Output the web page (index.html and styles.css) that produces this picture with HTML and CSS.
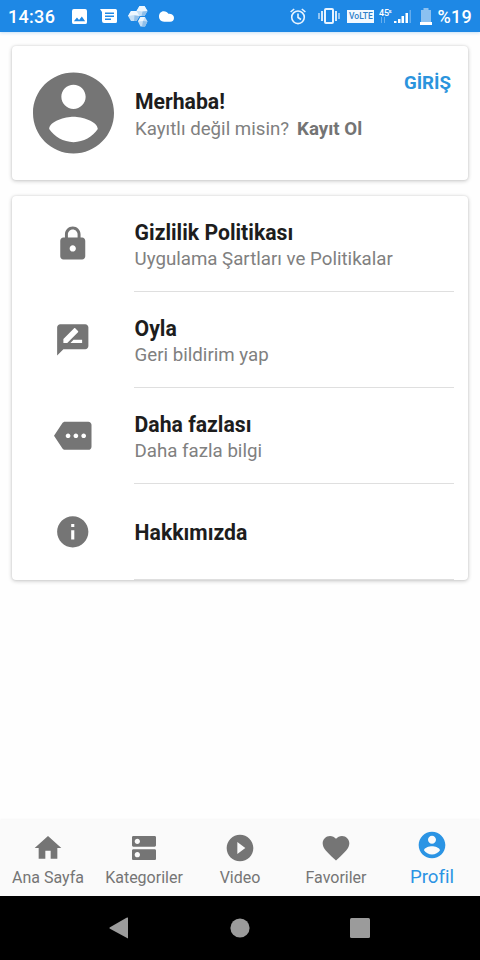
FILE: index.html
```html
<!DOCTYPE html>
<html lang="tr">
<head>
<meta charset="utf-8">
<title>Profil</title>
<link rel="stylesheet" href="styles.css">
</head>
<body>
<header class="status">
  <span class="clock">14:36</span>
  <div class="status-left">
    <svg class="s-photo" width="15" height="15" viewBox="0 0 16 16"><path fill="#fff" fill-rule="evenodd" d="M2 0h12a2 2 0 0 1 2 2v12a2 2 0 0 1-2 2H2a2 2 0 0 1-2-2V2a2 2 0 0 1 2-2zm0 13h12l-3.500-5-3 3.800L5.300 9z"/></svg>
    <svg class="s-news" width="17" height="14" viewBox="0 0 17 14"><path fill="#fff" fill-rule="evenodd" d="M0 0h15.500A1.500 1.500 0 0 1 17 1.500v11a1.500 1.500 0 0 1-1.500 1.500H4a2 2 0 0 1-2-2V3zM5 3.500V5h9V3.500zM5 6.500V8h9V6.500zM5 9.500V11h6V9.500z"/></svg>
    <svg class="s-hex" width="20" height="21" viewBox="0 0 20 21"><path fill="#c5dff6" d="M11.500 0h5l3 5-3 5h-5l-3-5zM3 5h5.500l3 5-3 5H3L0 10zM12.500 11h4.500l2.500 4.500-2.500 5h-4.500l-2.500-5z"/><path fill="#eef7ff" d="M11.500 0h5l3 5-5 .5-3.500-.5-2.500 0zM3 5h5.500l3 5-5-1L0 10zM10 15.500l2.500-4.500h4.500l-2 4z"/><path fill="#8fbfea" d="M14.500 5.500l5-.5-3 5h-3zM6.500 9.500l5 .5-3 5H6zM15 15l4.500.5-2.500 5h-3z"/></svg>
    <svg class="s-cloud" width="15" height="11" viewBox="0 0 16 11"><path fill="#fff" d="M5 0c2.500 0 4 1 5 2.500C13.500 2.500 16 4 16 7c0 2.500-1.500 4-4 4H5.500C2 11 0 8.500 0 5.500S2 0 5 0z"/></svg>
  </div>
  <div class="status-right">
    <svg class="s-alarm" width="16" height="17" viewBox="0 0 16 17"><g fill="none" stroke="#e8f4ff" stroke-width="1.600"><circle cx="8" cy="9.300" r="6.300"/><path d="M8 5.500v4l3 2M.6 4L4.200 1M15.400 4L11.800 1"/></g></svg>
    <svg class="s-vib" width="22" height="16" viewBox="0 0 22 16"><rect x="7" y="1" width="8" height="14" rx="1" fill="none" stroke="#e8f4ff" stroke-width="2"/><path d="M4 3v10M18 3v10" stroke="#d5eafc" stroke-width="2"/><path d="M1 5v6M21 5v6" stroke="#b5d8f7" stroke-width="1.500"/></svg>
    <span class="volte">VoLTE</span>
    <svg class="s-signal" width="34" height="17" viewBox="0 0 34 17"><text class="net" x="0" y="8">45</text><text class="net-s" x="9.500" y="5">s</text><path d="M2.500 9v6M5.500 9v6" stroke="#67afee"/><path fill="#fff" d="M15 13h2.500v2H15zM19 11h2.500v4H19zM22.500 8H25v7h-2.500zM26.500 5H29v10h-2.500z"/><path fill="#62abed" d="M30.500 2H32v13h-1.500z"/></svg>
    <svg class="s-batt" width="12" height="17" viewBox="0 0 12 17"><path fill="#8bc1f1" d="M3.500 0h5v2H11v12H1V2h2.500z"/><path fill="#fff" d="M0 14h12v3H0z"/></svg>
    <span class="pct">%19</span>
  </div>
</header>
<main>
  <section class="card account">
    <svg class="avatar" viewBox="2 2 20 20"><path fill="#757575" fill-rule="evenodd" d="M12 2C6.480 2 2 6.480 2 12s4.480 10 10 10 10-4.480 10-10S17.520 2 12 2zm0 3c1.660 0 3 1.340 3 3s-1.340 3-3 3-3-1.340-3-3 1.340-3 3-3zm0 14.200c-2.500 0-4.710-1.280-6-3.220.03-1.990 4-3.080 6-3.080 1.990 0 5.970 1.090 6 3.080-1.290 1.940-3.500 3.220-6 3.220z"/></svg>
    <div class="lines">
      <h2>Merhaba!</h2>
      <p class="sub">Kayıtlı değil misin?<b>Kayıt Ol</b></p>
    </div>
    <a class="login">GİRİŞ</a>
  </section>
  <section class="card list">
    <div class="row">
      <svg class="icon" viewBox="0 0 24 24"><path d="M18 8h-1V6c0-2.760-2.240-5-5-5S7 3.240 7 6v2H6c-1.100 0-2 .9-2 2v10c0 1.100.9 2 2 2h12c1.100 0 2-.9 2-2V10c0-1.100-.9-2-2-2zm-6 9c-1.100 0-2-.9-2-2s.9-2 2-2 2 .9 2 2-.9 2-2 2zm3.100-9H8.900V6c0-1.710 1.390-3.100 3.100-3.100s3.100 1.390 3.100 3.100v2z"/></svg>
      <div class="cell"><h2>Gizlilik Politikası</h2><p class="sub">Uygulama Şartları ve Politikalar</p></div>
    </div>
    <div class="row">
      <svg class="icon" viewBox="0 0 24 24"><path d="M20 2H4c-1.100 0-1.990.9-1.990 2L2 22l4-4h14c1.100 0 2-.9 2-2V4c0-1.100-.9-2-2-2zM6 14v-2.470l6.880-6.880c.2-.2.510-.2.710 0l1.770 1.770c.2.200.2.510 0 .710L8.470 14H6zm12 0h-7.500l2-2H18v2z"/></svg>
      <div class="cell"><h2>Oyla</h2><p class="sub">Geri bildirim yap</p></div>
    </div>
    <div class="row">
      <svg class="icon" viewBox="0 0 24 24"><path d="M22 3H7c-.69 0-1.230.35-1.590.88L0 12l5.410 8.110c.36.530.97.890 1.660.89H22c1.100 0 2-.9 2-2V5c0-1.100-.9-2-2-2zM9 13.500c-.83 0-1.500-.67-1.500-1.500s.67-1.500 1.500-1.500 1.500.67 1.500 1.500-.67 1.500-1.500 1.500zm5 0c-.83 0-1.500-.67-1.500-1.500s.67-1.500 1.500-1.500 1.500.67 1.500 1.500-.67 1.500-1.500 1.500zm5 0c-.83 0-1.500-.67-1.500-1.500s.67-1.500 1.500-1.500 1.500.67 1.500 1.500-.67 1.500-1.500 1.500z"/></svg>
      <div class="cell"><h2>Daha fazlası</h2><p class="sub">Daha fazla bilgi</p></div>
    </div>
    <div class="row">
      <svg class="icon" viewBox="0 0 24 24"><path d="M12 2C6.480 2 2 6.480 2 12s4.480 10 10 10 10-4.480 10-10S17.520 2 12 2zm1 15h-2v-6h2v6zm0-8h-2V7h2v2z"/></svg>
      <div class="cell solo"><h2>Hakkımızda</h2></div>
    </div>
  </section>
</main>
<nav class="tabs">
  <a class="tab"><svg viewBox="0 0 24 24"><path d="M10 20v-6h4v6h5v-8h3L12 3 2 12h3v8z"/></svg><span>Ana Sayfa</span></a>
  <a class="tab"><svg viewBox="0 0 24 24"><path d="M20 13H4c-.55 0-1 .45-1 1v6c0 .55.45 1 1 1h16c.55 0 1-.45 1-1v-6c0-.55-.45-1-1-1zM7 19c-1.100 0-2-.9-2-2s.9-2 2-2 2 .9 2 2-.9 2-2 2zM20 3H4c-.55 0-1 .45-1 1v6c0 .55.45 1 1 1h16c.55 0 1-.45 1-1V4c0-.55-.45-1-1-1zM7 9c-1.100 0-2-.9-2-2s.9-2 2-2 2 .9 2 2-.9 2-2 2z"/></svg><span>Kategoriler</span></a>
  <a class="tab"><svg viewBox="0 0 24 24"><path d="M12 2C6.480 2 2 6.480 2 12s4.480 10 10 10 10-4.480 10-10S17.520 2 12 2zm-2 14.500v-9l6 4.500-6 4.500z"/></svg><span>Video</span></a>
  <a class="tab"><svg viewBox="0 0 24 24"><path d="M12 21.350l-1.450-1.320C5.400 15.360 2 12.280 2 8.500 2 5.420 4.420 3 7.500 3c1.740 0 3.410.81 4.500 2.090C13.090 3.810 14.760 3 16.500 3 19.580 3 22 5.420 22 8.500c0 3.780-3.400 6.860-8.550 11.540L12 21.350z"/></svg><span>Favoriler</span></a>
  <a class="tab active"><svg viewBox="0 0 24 24"><path fill-rule="evenodd" d="M12 2C6.480 2 2 6.480 2 12s4.480 10 10 10 10-4.480 10-10S17.520 2 12 2zm0 3c1.660 0 3 1.340 3 3s-1.340 3-3 3-3-1.340-3-3 1.340-3 3-3zm0 14.200c-2.500 0-4.710-1.280-6-3.220.03-1.990 4-3.080 6-3.080 1.990 0 5.970 1.090 6 3.080-1.290 1.940-3.500 3.220-6 3.220z"/></svg><span>Profil</span></a>
</nav>
<footer class="sysnav">
  <svg width="22" height="22" viewBox="0 0 22 22"><path d="M20 .5V21.500L2 11.800Q.500 11 2 10.200L18.500.8Z"/></svg>
  <svg width="20" height="20" viewBox="0 0 20 20"><circle cx="10" cy="10" r="9.600"/></svg>
  <svg width="20" height="20" viewBox="0 0 20 20"><rect width="20" height="20" rx="1.500"/></svg>
</footer>
</body>
</html>
```
FILE: styles.css
```css
* { box-sizing: border-box; margin: 0; padding: 0; }
body {
  width: 480px;
  height: 960px;
  display: flex;
  flex-direction: column;
  background: #fefefe;
  font-family: Roboto, "Liberation Sans", sans-serif;
  overflow: hidden;
}
svg { display: block; flex: none; }
.status {
  height: 32px;
  flex: none;
  display: flex;
  align-items: center;
  padding: 0 8px;
  background: #1e88e5;
  color: #fff;
  box-shadow: 0 1px 3px rgba(30, 136, 229, .25);
}
.clock, .pct { font-size: 18px; font-weight: 500; line-height: 32px; padding-top: 1px; height: 32px; }
.clock { width: 64px; letter-spacing: .3px; }
.status-left { display: flex; align-items: center; }
.s-news { margin-left: 13px; }
.s-hex { margin-left: 11px; }
.s-cloud { margin-left: 11px; }
.status-right { display: flex; align-items: center; margin-left: auto; }
.s-vib { margin-left: 12px; }
.volte {
  margin-left: 7px;
  width: 27px;
  height: 13px;
  line-height: 13px;
  background: #f3f9ff;
  color: #2f7fc8;
  font-size: 8.5px;
  font-weight: 500;
  text-align: center;
}
.s-signal { margin-left: 5px; }
.net { font-size: 9px; font-weight: 500; fill: #fff; }
.net-s { font-size: 6px; font-weight: 700; fill: #fff; }
.s-batt { margin-left: 7px; }
.pct { margin-left: 5px; letter-spacing: .3px; }
main { flex: 1; padding: 14px 12px 0; }
.card {
  background: #fff;
  border-radius: 4px;
  box-shadow: 0 1px 4px rgba(0, 0, 0, .22), 0 0 2px rgba(0, 0, 0, .1);
}
.account { height: 134px; display: flex; padding: 0 17px 0 21px; }
.avatar { width: 81px; height: 82px; margin-top: 26px; }
.lines { margin: 42px 0 0 21px; flex: 1; white-space: nowrap; }
.lines .sub { margin-top: 1px; }
h2 { font-size: 21.2px; line-height: 27px; font-weight: 700; color: #1d1d1d; }
.sub { font-size: 18.7px; line-height: 27px; color: #808080; }
.sub b { font-weight: 700; color: #747474; margin-left: 8px; }
.login { margin-top: 25px; font-size: 18.67px; line-height: 24px; font-weight: 700; color: #2b94dd; }
.list { height: 384px; margin-top: 16px; padding-right: 14px; }
.row { height: 96px; display: flex; align-items: center; }
.icon { width: 37.5px; height: 37.5px; margin: 0 42.2px 0 42.3px; fill: #757575; }
.cell { height: 96px; flex: 1; border-bottom: 1px solid #dfdfdf; padding: 23px 0 0 .6px; white-space: nowrap; }
.solo { padding-top: 35px; }
.tabs {
  height: 76px;
  flex: none;
  display: grid;
  grid-template-columns: repeat(5, 96px);
  background: #fafafa;
  box-shadow: 0 -1px 2px rgba(0, 0, 0, .03);
}
.tab { display: flex; flex-direction: column; align-items: center; padding-top: 12px; color: #757575; white-space: nowrap; }
.tab svg { width: 32px; height: 32px; fill: currentColor; }
.tab span { font-size: 16px; line-height: 20px; margin-top: 4px; }
.active { color: #2b94e4; padding-top: 9.4px; }
.active span { font-size: 18.67px; margin-top: 5.6px; }
.sysnav {
  height: 64px;
  flex: none;
  display: flex;
  align-items: center;
  justify-content: center;
  gap: 100px;
  background: #000;
  fill: #9b9b9b;
}
.sysnav svg:first-child { margin-left: -2px; }
```
